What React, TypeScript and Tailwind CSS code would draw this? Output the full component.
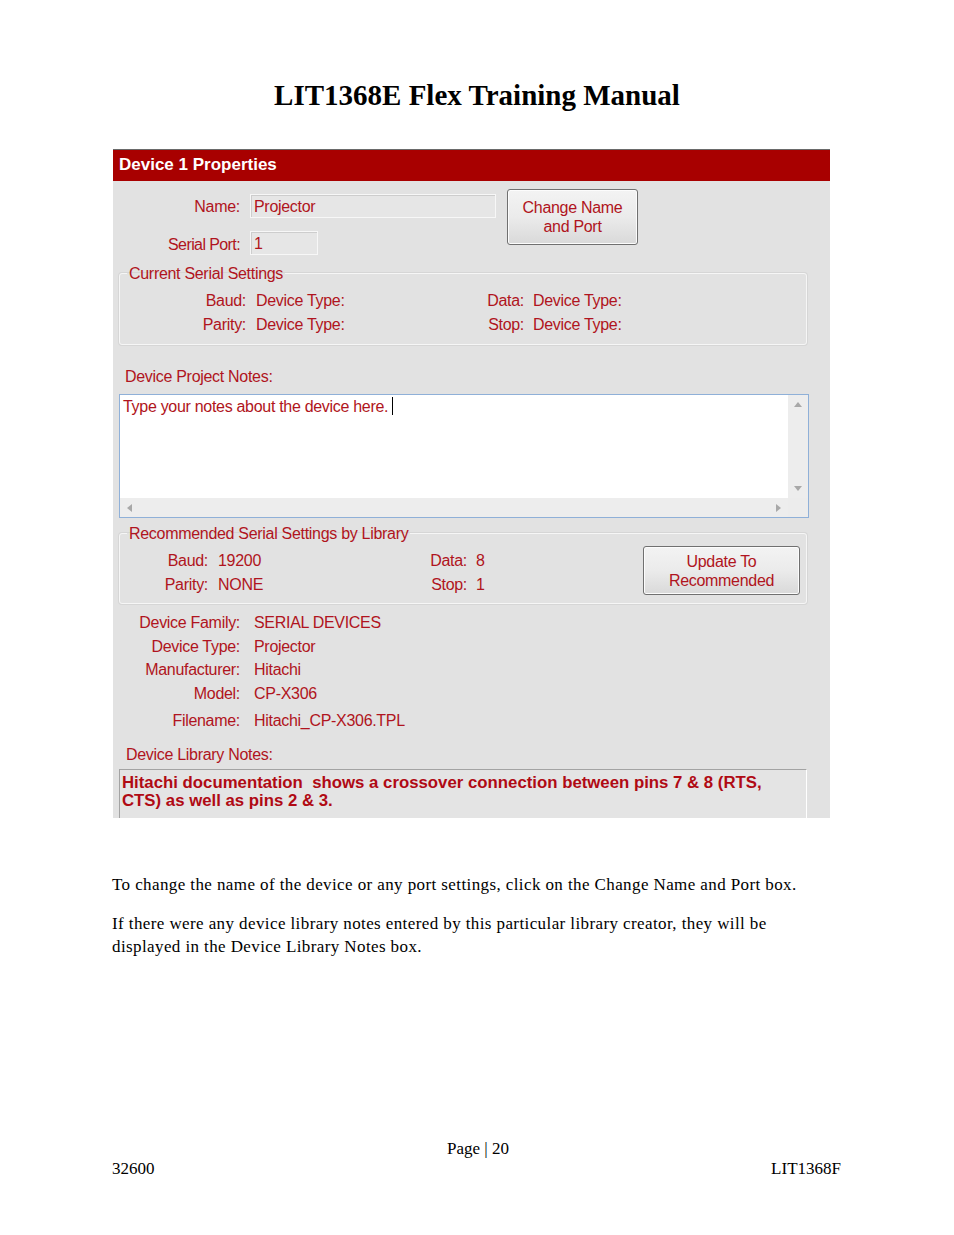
import React from "react"

const red = "text-[#b01420]"
const sans = "font-['Liberation_Sans',Arial,sans-serif]"

function Field({ w, value }: { w: string; value: string }) {
  return (
    <div
      className={`${w} h-[24px] bg-[#e6e6e6] border border-[#f7f7f7] shadow-[inset_1px_1px_0_#cdcdcd] px-[3px] pt-[2px] leading-[20px] text-[16px] ${red}`}
    >
      {value}
    </div>
  )
}

function WinButton({ lines, w, h }: { lines: string[]; w: string; h: string }) {
  return (
    <button
      type="button"
      className={`${w} ${h} shrink-0 rounded-[3px] border border-[#707070] bg-gradient-to-b from-[#f3f3f3] via-[#ebebeb] to-[#d9d9d9] shadow-[inset_0_0_0_1px_#fcfcfc] flex flex-col items-center justify-center text-[16px] leading-[19px] tracking-[-0.3px] ${red}`}
    >
      {lines.map((l) => (
        <span key={l}>{l}</span>
      ))}
    </button>
  )
}

function GroupBox({ title, children }: { title: string; children: React.ReactNode }) {
  return (
    <fieldset className="ml-[6px] w-[688px] rounded-[3px] border border-[#f6f6f6] shadow-[0_0_0_1px_#d6d6d6]">
      <legend className={`ml-[7px] px-[2px] text-[16px] leading-[17px] ${red}`}>{title}</legend>
      {children}
    </fieldset>
  )
}

function Arrow({ dir }: { dir: "up" | "down" | "left" | "right" }) {
  const pts = {
    up: "0,5 4,0 8,5",
    down: "0,0 4,5 8,0",
    left: "5,0 0,4 5,8",
    right: "0,0 5,4 0,8",
  }[dir]
  const vert = dir === "up" || dir === "down"
  return (
    <svg width={vert ? 8 : 5} height={vert ? 5 : 8} viewBox={vert ? "0 0 8 5" : "0 0 5 8"}>
      <polygon points={pts} fill="#a8a8a8" />
    </svg>
  )
}

export default function App() {
  const info = [
    ["Device Family:", "SERIAL DEVICES"],
    ["Device Type:", "Projector"],
    ["Manufacturer:", "Hitachi"],
    ["Model:", "CP-X306"],
  ]

  return (
    <div className="w-[954px] min-h-[1235px] bg-white font-['Liberation_Serif','Times_New_Roman',serif] text-black">
      {/* Title */}
      <h1 className="pt-[78px] text-center text-[29px] leading-[34px] font-bold">
        LIT1368E Flex Training Manual
      </h1>

      {/* Screenshot panel */}
      <div className={`mt-[37px] ml-[113px] w-[717px] h-[669px] overflow-hidden bg-[#e2e2e2] tracking-[-0.3px] ${sans}`}>
        <div className="h-[32px] bg-[#a80000] border-t border-[#6a6a6a] px-[6px] text-white font-bold text-[17px] leading-[30px] tracking-normal">
          Device 1 Properties
        </div>

        <div className="flex pt-[8px]">
          <div className="w-[383px] pt-[5px] flex flex-col gap-[13px]">
            <div className="flex h-[24px]">
              <span className={`w-[127px] text-right text-[16px] leading-[26px] ${red}`}>Name:</span>
              <div className="ml-[10px]">
                <Field w="w-[246px]" value="Projector" />
              </div>
            </div>
            <div className="flex h-[24px]">
              <span className={`w-[127px] text-right text-[16px] leading-[28px] tracking-[-0.6px] ${red}`}>Serial Port:</span>
              <div className="ml-[10px]">
                <Field w="w-[68px]" value="1" />
              </div>
            </div>
          </div>
          <div className="ml-[11px]">
            <WinButton lines={["Change Name", "and Port"]} w="w-[131px]" h="h-[56px]" />
          </div>
        </div>

        <div className="mt-[10px]">
          <GroupBox title="Current Serial Settings">
            <div className={`pt-[7px] pb-[7px] text-[16px] leading-[24px] ${red}`}>
              {[
                ["Baud:", "Data:"],
                ["Parity:", "Stop:"],
              ].map(([a, b]) => (
                <div key={a} className="flex">
                  <span className="w-[126px] text-right">{a}</span>
                  <span className="w-[218px] pl-[10px]">Device Type:</span>
                  <span className="w-[60px] text-right">{b}</span>
                  <span className="pl-[9px]">Device Type:</span>
                </div>
              ))}
            </div>
          </GroupBox>
        </div>

        <div className={`mt-[23px] ml-[12px] text-[16px] leading-[18px] ${red}`}>
          Device Project Notes:
        </div>

        {/* Notes textarea */}
        <div className="mt-[8px] ml-[6px] w-[690px] h-[124px] border border-[#8fb0d8] bg-white flex flex-col">
          <div className="flex flex-1">
            <div className={`flex-1 px-[3px] pt-[2px] text-[16px] leading-[20px] ${red}`}>
              Type your notes about the device here.
              <span className="inline-block align-[-3px] ml-[4px] w-px h-[18px] bg-black" />
            </div>
            <div className="w-[20px] bg-[#ededed] flex flex-col items-center justify-between py-[7px]">
              <Arrow dir="up" />
              <Arrow dir="down" />
            </div>
          </div>
          <div className="h-[19px] flex">
            <div className="flex-1 bg-[#ededed] flex items-center justify-between px-[7px]">
              <Arrow dir="left" />
              <Arrow dir="right" />
            </div>
            <div className="w-[20px] bg-[#ececec]" />
          </div>
        </div>

        <div className="mt-[7px]">
          <GroupBox title="Recommended Serial Settings by Library">
            <div className="flex">
              <div className={`pt-[7px] pb-[6px] text-[16px] leading-[24px] ${red}`}>
                {[
                  ["Baud:", "19200", "Data:", "8"],
                  ["Parity:", "NONE", "Stop:", "1"],
                ].map(([a, av, b, bv]) => (
                  <div key={a} className="flex">
                    <span className="w-[88px] text-right">{a}</span>
                    <span className="w-[209px] pl-[10px]">{av}</span>
                    <span className="w-[50px] text-right">{b}</span>
                    <span className="pl-[9px]">{bv}</span>
                  </div>
                ))}
              </div>
              <div className="ml-auto mr-[6px] mt-[4px]">
                <WinButton lines={["Update To", "Recommended"]} w="w-[157px]" h="h-[49px]" />
              </div>
            </div>
          </GroupBox>
        </div>

        {/* Library info */}
        <div className={`mt-[7px] text-[16px] leading-[23.5px] ${red}`}>
          {info.map(([k, v]) => (
            <div key={k} className="flex">
              <span className="w-[127px] text-right">{k}</span>
              <span className="pl-[14px]">{v}</span>
            </div>
          ))}
          <div className="flex mt-[4px]">
            <span className="w-[127px] text-right">Filename:</span>
            <span className="pl-[14px]">Hitachi_CP-X306.TPL</span>
          </div>
        </div>

        <div className={`mt-[13px] ml-[13px] text-[16px] leading-[18px] ${red}`}>Device Library Notes:</div>

        <div className="mt-[5px] ml-[6px] w-[688px] h-[80px] border-t border-l border-[#a3a3a3] border-r-white border-r bg-[#e4e4e4] px-[2px] pt-[4px] text-[16.8px] leading-[18px] font-bold tracking-normal text-[#b00a14] whitespace-pre-wrap">
          {"Hitachi documentation  shows a crossover connection between pins 7 & 8 (RTS,\nCTS) as well as pins 2 & 3."}
        </div>
      </div>

      {/* Body text */}
      <div className="ml-[112px] w-[740px] text-[17px] leading-[23px] tracking-[0.4px]">
        <p className="mt-[55px]">
          To change the name of the device or any port settings, click on the Change Name and Port box.
        </p>
        <p className="mt-[16px]">
          If there were any device library notes entered by this particular library creator, they will be
          <br />
          displayed in the Device Library Notes box.
        </p>
      </div>

      {/* Footer */}
      <div className="mt-[181px] px-[112px] text-[17px] leading-[20px]">
        <div className="text-center pl-[2px]">Page | 20</div>
        <div className="flex justify-between pr-[1px]">
          <span>32600</span>
          <span>LIT1368F</span>
        </div>
      </div>
    </div>
  )
}
